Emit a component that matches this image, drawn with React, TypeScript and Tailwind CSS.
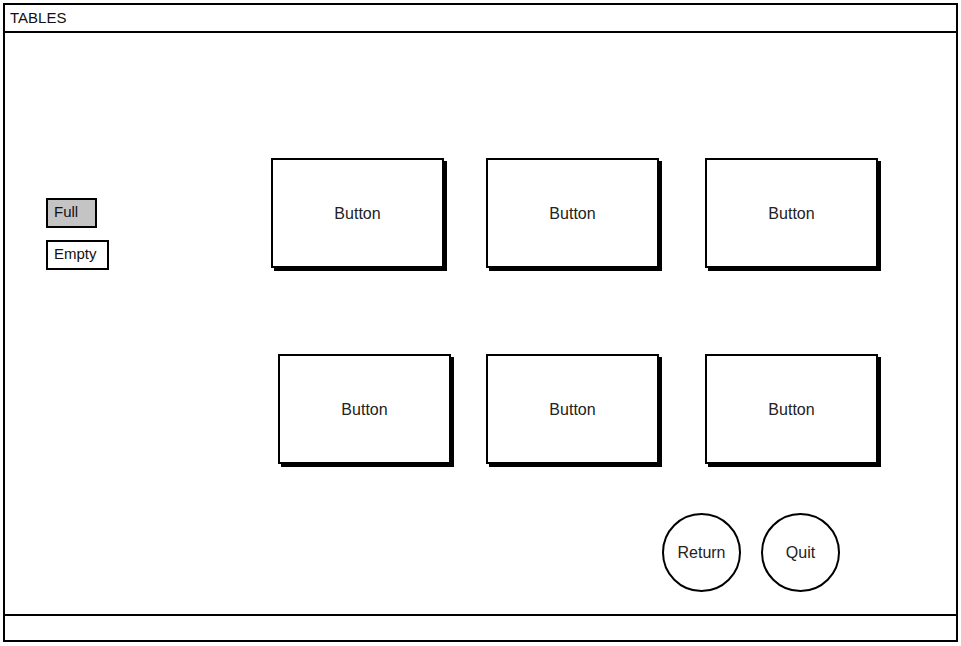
import React from 'react';

const font = { fontFamily: '"Liberation Sans", Arial, sans-serif' };

const Box: React.FC<{ label: string; className?: string }> = ({ label, className = '' }) => (
  <button
    className={`w-[173px] h-[110px] shrink-0 border-2 border-black bg-white shadow-[3px_3px_0_0_#000] text-[16px] text-[#222] flex items-center justify-center pt-[1px] ${className}`}
  >
    {label}
  </button>
);

const Circle: React.FC<{ label: string }> = ({ label }) => (
  <button className="w-[79px] h-[79px] rounded-full border-2 border-black bg-white text-[16px] text-[#222] flex items-center justify-center">
    {label}
  </button>
);

export default function App() {
  return (
    <div className="w-[961px] h-[646px] bg-white p-[3px]" style={font}>
      <div className="w-[955px] h-[639px] border-2 border-black flex flex-col">
        {/* title bar */}
        <div className="h-[28px] border-b-2 border-black flex items-center px-[5px] text-[15px] text-[#111]">
          TABLES
        </div>

        {/* main */}
        <div className="flex-1 pt-[125px]">
          <div className="flex items-start">
            <div className="ml-[41px] mt-[40px] flex flex-col gap-[12px] w-[63px]">
              <div className="w-[51px] h-[30px] border-2 border-black bg-[#c4c4c4] text-[15px] text-[#111] flex items-center px-[6px] pb-[2px]">
                Full
              </div>
              <div className="w-[63px] h-[30px] border-2 border-black bg-white text-[15px] text-[#111] flex items-center px-[6px] pb-[2px]">
                Empty
              </div>
            </div>
            <Box label="Button" className="ml-[162px]" />
            <Box label="Button" className="ml-[42px]" />
            <Box label="Button" className="ml-[46px]" />
          </div>

          <div className="flex mt-[84px]">
            <Box label="Button" className="ml-[273px]" />
            <Box label="Button" className="ml-[35px]" />
            <Box label="Button" className="ml-[46px]" />
          </div>

          <div className="flex mt-[49px] ml-[657px] gap-[20px]">
            <Circle label="Return" />
            <Circle label="Quit" />
          </div>
        </div>

        {/* bottom bar */}
        <div className="h-[26px] border-t-2 border-black" />
      </div>
    </div>
  );
}
